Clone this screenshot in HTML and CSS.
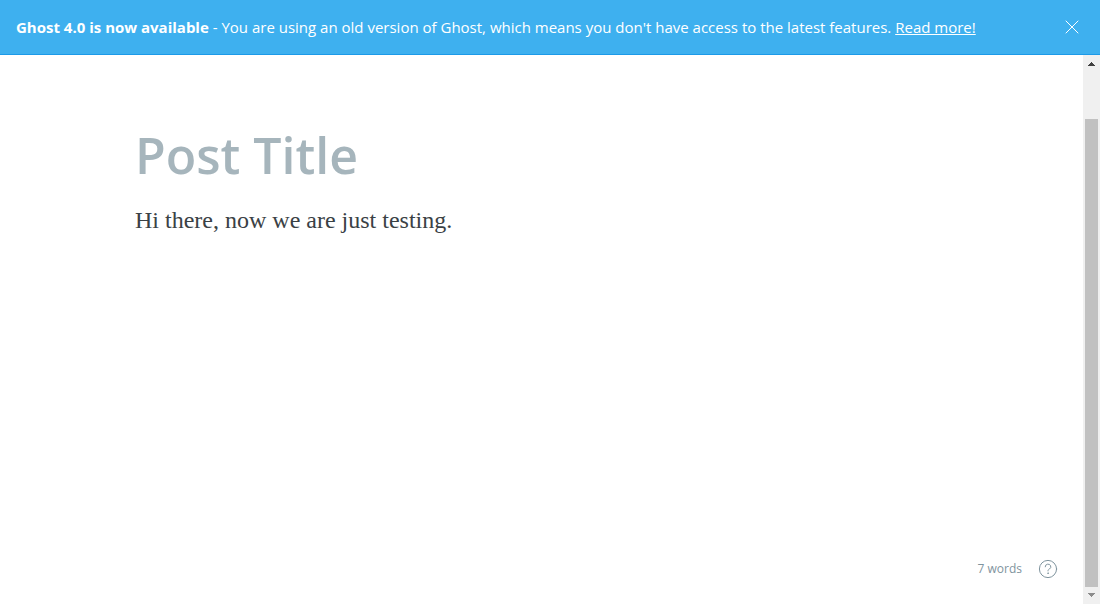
FILE: index.html
```html
<!DOCTYPE html>
<html lang="en">
<head>
  <meta charset="utf-8">
  <meta name="viewport" content="width=device-width, initial-scale=1">
  <title>Editor - Ghost</title>
  <link rel="stylesheet" href="styles.css">
</head>
<body>
  <aside class="alert">
    <p class="alert-text"><strong>Ghost 4.0 is now available</strong> - You are using an old version of Ghost, which means you don't have access to the latest features. <a class="alert-link" href="#">Read more!</a></p>
    <button class="alert-close" type="button" aria-label="Close">
      <svg width="14" height="14" viewBox="0 0 14 14" fill="none" stroke="currentColor" stroke-linecap="round" aria-hidden="true"><path d="M1 1l12 12M13 1L1 13"/></svg>
    </button>
  </aside>
  <div class="workspace">
    <main class="editor">
      <input class="post-title" type="text" placeholder="Post Title" aria-label="Post Title">
      <div class="post-body" contenteditable="true" role="textbox" aria-label="Post content" spellcheck="false"><p>Hi there, now we are just testing.</p></div>
      <footer class="status">
        <span>7 words</span>
        <button class="help" type="button" aria-label="Markdown help">
          <svg width="20" height="20" viewBox="0 0 20 20" fill="none" stroke="currentColor" stroke-linecap="round" aria-hidden="true"><circle cx="10" cy="10" r="8.6"/><path d="M7.2 7.8a2.8 2.6 0 1 1 4.2 2.2c-.9.5-1.4.9-1.4 1.9"/><circle cx="10" cy="14.2" r=".3"/></svg>
        </button>
      </footer>
    </main>
    <div class="scrollbar" aria-hidden="true">
      <svg class="arrow arrow-up" width="7" height="4" viewBox="0 0 7 4" shape-rendering="crispEdges"><path d="M3 0h1v1h1v1h1v1h1v1H0V3h1V2h1V1h1z"/></svg>
      <div class="thumb"></div>
      <svg class="arrow arrow-down" width="7" height="4" viewBox="0 0 7 4" shape-rendering="crispEdges"><path d="M0 0h7v1H6v1H5v1H4v1H3V3H2V2H1V1H0z"/></svg>
    </div>
  </div>
</body>
</html>
```
FILE: styles.css
```css
* {
  box-sizing: border-box;
}

body {
  margin: 0;
  height: 100vh;
  display: flex;
  flex-direction: column;
  background: #fff;
  color: #15171a;
  font-family: "Segoe UI", "Open Sans", "Noto Sans", sans-serif;
}

button {
  display: flex;
  padding: 0;
  border: 0;
  background: none;
  color: inherit;
  cursor: pointer;
}

.alert {
  display: flex;
  align-items: center;
  justify-content: space-between;
  padding: 16px 20px 16px 16px;
  border-bottom: 1px solid #1c9ae8;
  background: #3eb0ef;
  color: #fff;
}

.alert-text {
  margin: 0;
  font-size: 15px;
  line-height: 22px;
}

.alert-link {
  color: inherit;
}

.alert-close {
  padding: 0 1px 1px;
}

.workspace {
  flex: 1;
  display: flex;
  min-height: 0;
}

.editor {
  flex: 1;
  display: flex;
  flex-direction: column;
  min-width: 0;
  padding: 64px 25px 25px 135px;
}

.post-title {
  width: 100%;
  padding: 0;
  border: 0;
  outline: 0;
  background: none;
  color: #15171a;
  font-family: inherit;
  font-size: 50px;
  font-weight: 600;
  line-height: 72px;
}

.post-title::placeholder {
  color: #a6b5bc;
  opacity: 1;
}

.post-body {
  flex: 1;
  padding-top: 11px;
  outline: 0;
  color: #3a4145;
  font-family: Georgia, "Liberation Serif", serif;
  font-size: 24px;
  line-height: 36px;
}

.post-body p {
  margin: 0;
}

.status {
  display: flex;
  align-items: center;
  justify-content: flex-end;
  gap: 16px;
  color: #7f949e;
  font-size: 12px;
  line-height: 20px;
}

.scrollbar {
  display: flex;
  flex-direction: column;
  align-items: center;
  width: 17px;
  padding: 7px 2px;
  background: #f0f0f0;
}

.arrow-up {
  fill: #404040;
}

.arrow-down {
  fill: #8c8c8c;
}

.thumb {
  flex: 1;
  align-self: stretch;
  margin: 53px 0 6px;
  background: #c1c1c1;
}
```
